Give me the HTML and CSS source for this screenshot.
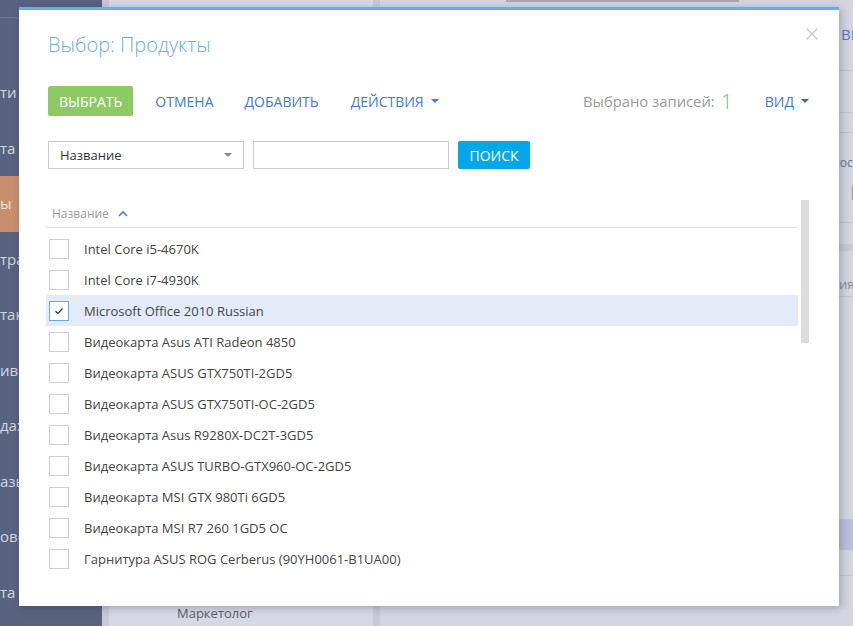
FILE: index.html
```html
<!DOCTYPE html>
<html lang="ru">
<head>
<meta charset="utf-8">
<title>Выбор: Продукты</title>
<link rel="stylesheet" href="styles.css">
</head>
<body>
<div class="app">
  <aside class="sidebar">
    <div class="side-top"></div>
    <ul class="side-menu">
      <li>ти</li>
      <li>та</li>
      <li class="active">ы</li>
      <li>тра</li>
      <li>так</li>
      <li>ивн</li>
      <li>дах</li>
      <li>азы</li>
      <li>ово</li>
      <li>та</li>
    </ul>
  </aside>
  <div class="gutter"></div>
  <div class="ws-panel">
    <div class="ws-panel-fill"></div>
    <div class="ws-panel-row">Маркетолог</div>
  </div>
  <div class="ws-split"></div>
  <div class="ws-main">
    <div class="ws-topbar"></div>
    <div class="ws-row r1"><span class="ws-link">ВЫБРАТЬ</span></div>
    <div class="ws-row r2"></div>
    <div class="ws-row r3"></div>
    <div class="ws-row r4"><span class="ws-label">Стоимость</span><span class="ws-value">Р</span></div>
    <div class="ws-row r5"></div>
    <div class="ws-band"></div>
    <div class="ws-row r6"><span class="ws-label2">ия</span></div>
    <div class="ws-row r7"></div>
    <div class="ws-sel"></div>
    <div class="ws-row r8"></div>
  </div>
</div>

<div class="modal">
  <button class="close" aria-label="Закрыть">
    <svg width="12" height="12" viewBox="0 0 12 12"><path d="M0.5 0.5 L11.5 11.5 M11.5 0.5 L0.5 11.5" stroke="#c4c4c4" stroke-width="1.2" fill="none"/></svg>
  </button>
  <h1 class="title">Выбор: Продукты</h1>

  <div class="toolbar">
    <div class="tb-left">
      <button class="btn-green">ВЫБРАТЬ</button>
      <span class="tb-link l1">ОТМЕНА</span>
      <span class="tb-link l2">ДОБАВИТЬ</span>
      <span class="tb-link l3">ДЕЙСТВИЯ<i class="caret"></i></span>
    </div>
    <div class="tb-right">
      <span class="sel-label">Выбрано записей:</span>
      <span class="sel-count">1</span>
      <span class="tb-view">ВИД<i class="caret dark"></i></span>
    </div>
  </div>

  <div class="filter">
    <div class="select">Название<i class="caret gray"></i></div>
    <div class="input"></div>
    <button class="btn-blue">ПОИСК</button>
  </div>

  <div class="grid-wrap">
    <div class="grid">
      <div class="grid-head">Название
        <svg class="sort" width="10" height="7" viewBox="0 0 10 7"><path d="M1 6 L5 2 L9 6" stroke="#4a7fd0" stroke-width="1.6" fill="none"/></svg>
      </div>
      <ul class="rows">
        <li class="row"><span class="cb"></span>Intel Core i5-4670K</li>
        <li class="row"><span class="cb"></span>Intel Core i7-4930K</li>
        <li class="row selected"><span class="cb checked"><svg width="10" height="8" viewBox="0 0 10 8"><path d="M1.5 4.2 L4 6.5 L8.5 1.5" stroke="#333" stroke-width="1.2" fill="none"/></svg></span>Microsoft Office 2010 Russian</li>
        <li class="row"><span class="cb"></span>Видеокарта Asus ATI Radeon 4850</li>
        <li class="row"><span class="cb"></span>Видеокарта ASUS GTX750TI-2GD5</li>
        <li class="row"><span class="cb"></span>Видеокарта ASUS GTX750TI-OC-2GD5</li>
        <li class="row"><span class="cb"></span>Видеокарта Asus R9280X-DC2T-3GD5</li>
        <li class="row"><span class="cb"></span>Видеокарта ASUS TURBO-GTX960-OC-2GD5</li>
        <li class="row"><span class="cb"></span>Видеокарта MSI GTX 980Ti 6GD5</li>
        <li class="row"><span class="cb"></span>Видеокарта MSI R7 260 1GD5 OC</li>
        <li class="row"><span class="cb"></span>Гарнитура ASUS ROG Cerberus (90YH0061-B1UA00)</li>
      </ul>
    </div>
    <div class="scrollbar"><div class="thumb"></div></div>
  </div>
</div>
</body>
</html>
```

FILE: styles.css
```css
* { box-sizing: border-box; }
html, body {
  margin: 0;
  padding: 0;
  width: 853px;
  height: 626px;
  overflow: hidden;
  font-family: "Open Sans", "Noto Sans", sans-serif;
}
body { position: relative; background: #d3d5e1; }

/* background application (dimmed) */
.app {
  display: flex;
  height: 626px;
}
.sidebar {
  width: 102px;
  flex: none;
  background: #59627f;
  overflow: hidden;
}
.side-top {
  height: 18px;
  border-bottom: 1px solid #6d7592;
}
.side-menu {
  list-style: none;
  margin: 47px 0 0;
  padding: 0;
}
.side-menu li {
  height: 55.5px;
  line-height: 55.5px;
  font-size: 15px;
  color: #d3d6e2;
  white-space: nowrap;
}
.side-menu li.active {
  background: #c78f6e;
  color: #efe2da;
}
.gutter {
  width: 7px;
  flex: none;
  background: #c7c9d6;
}
.ws-panel {
  width: 264px;
  flex: none;
  background: #d6d8e4;
  display: flex;
  flex-direction: column;
}
.ws-panel-fill { flex: 1; }
.ws-panel-row {
  height: 26px;
  line-height: 26px;
  padding-left: 68px;
  font-size: 13px;
  color: #5b5d6a;
}
.ws-split {
  width: 7px;
  flex: none;
  background: #c7c9d5;
}
.ws-main {
  flex: 1;
  background: #d3d5e1;
  overflow: hidden;
}
.ws-topbar {
  height: 2px;
  width: 233px;
  margin-left: 126px;
  background: #a7a9b9;
}
.ws-row {
  border-bottom: 1px solid #bfc1ce;
  padding-left: 461px;
  white-space: nowrap;
}
.r1 { height: 69px; line-height: 64px; }
.ws-link { color: #5b74c6; font-size: 15px; }
.r2 { height: 42px; }
.r3 { height: 20px; }
.r4 { height: 90px; padding-left: 423px; padding-top: 21px; }
.ws-label { display: block; font-size: 12px; color: #6e7080; }
.ws-value { display: block; padding-left: 47px; margin-top: 8px; font-size: 20px; color: #86ad72; }
.r5 { height: 21px; border-bottom: none; }
.ws-band { height: 7px; background: #c8cad7; }
.r6 { height: 46px; line-height: 64px; padding-left: 459px; }
.ws-label2 { font-size: 13px; color: #8a8c9a; }
.r7 { height: 222px; border-bottom: none; }
.ws-sel { height: 31px; background: #b8c1dc; }
.r8 { height: 26px; }

/* modal */
.modal {
  position: absolute;
  left: 19px;
  top: 7px;
  width: 820px;
  height: 599px;
  background: #fff;
  border-top: 3px solid #5db4df;
  box-shadow: 2px 2px 8px rgba(40, 44, 70, 0.3);
  padding: 21px 30px 0 27px;
}
.close {
  position: absolute;
  right: 21px;
  top: 18px;
  width: 12px;
  height: 12px;
  padding: 0;
  border: 0;
  background: none;
  line-height: 0;
}
.title {
  margin: 0 0 0 2px;
  height: 28px;
  line-height: 28px;
  font-size: 20px;
  font-weight: 300;
  color: #6aafe0;
}

.toolbar {
  margin: 27px 0 0 2px;
  height: 30px;
  display: flex;
  align-items: center;
  justify-content: space-between;
}
.tb-left, .tb-right {
  display: flex;
  align-items: center;
}
.btn-green {
  height: 30px;
  padding: 0 11px;
  border: 0;
  border-radius: 2px;
  background: #8dca64;
  color: #fff;
  font-family: inherit;
  font-size: 14px;
}
.tb-link {
  font-size: 14px;
  color: #4379cf;
  display: flex;
  align-items: center;
}
.tb-link.l1 { margin-left: 22px; }
.tb-link.l2 { margin-left: 31px; }
.tb-link.l3 { margin-left: 32px; }
.caret {
  display: inline-block;
  width: 0;
  height: 0;
  margin-left: 7px;
  border-left: 4px solid transparent;
  border-right: 4px solid transparent;
  border-top: 4px solid #4379cf;
}
.caret.dark { border-top-color: #46679e; }
.caret.gray { border-top-color: #888; }
.sel-label {
  font-size: 14.8px;
  color: #9a9a9a;
}
.sel-count {
  margin-left: 6px;
  font-size: 21px;
  font-weight: 300;
  color: #74bf72;
  line-height: 20px;
}
.tb-view {
  margin-left: 32px;
  font-size: 14px;
  color: #4379cf;
  display: flex;
  align-items: center;
}

.filter {
  margin: 25px 0 0 2px;
  display: flex;
  height: 28px;
}
.select {
  width: 196px;
  height: 28px;
  border: 1px solid #cccccc;
  padding: 0 11px;
  display: flex;
  align-items: center;
  justify-content: space-between;
  font-size: 13px;
  color: #333;
}
.input {
  width: 196px;
  height: 28px;
  margin-left: 9px;
  border: 1px solid #cccccc;
}
.btn-blue {
  margin-left: 9px;
  width: 72px;
  height: 28px;
  border: 0;
  border-radius: 2px;
  background: #05a7e8;
  color: #fff;
  font-family: inherit;
  font-size: 14px;
  padding: 0;
}

.grid-wrap {
  margin-top: 31px;
  display: flex;
}
.grid {
  width: 752px;
}
.grid-head {
  height: 28px;
  line-height: 27px;
  border-bottom: 1px solid #e3e3e3;
  padding-left: 6px;
  font-size: 12px;
  color: #9b9b9b;
  display: flex;
  align-items: center;
}
.sort { margin-left: 9px; margin-top: -1px; }
.rows {
  list-style: none;
  margin: 5px 0 0;
  padding: 0;
}
.row {
  height: 31px;
  display: flex;
  align-items: center;
  padding-left: 3px;
  font-size: 13px;
  color: #444;
  white-space: nowrap;
}
.row.selected { background: #e3ebf9; }
.cb {
  width: 20px;
  height: 20px;
  border: 1px solid #cfcfcf;
  background: #fff;
  margin-right: 15px;
  display: flex;
  align-items: center;
  justify-content: center;
  flex: none;
}
.cb.checked { border-color: #63aae6; }
.scrollbar {
  width: 8px;
  margin-left: 3px;
}
.thumb {
  height: 143px;
  background: #dcdcdf;
}
```
